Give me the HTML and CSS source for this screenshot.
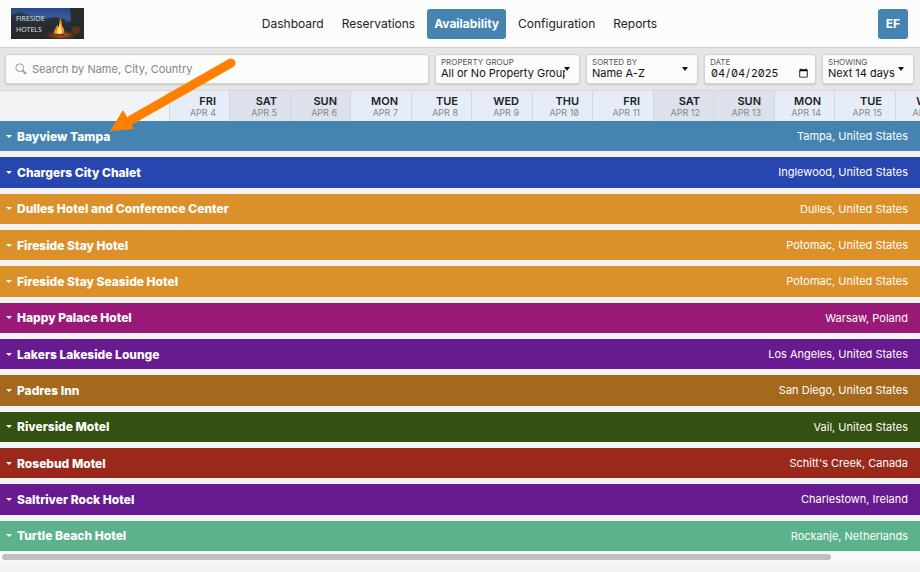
FILE: index.html
```html
<!DOCTYPE html>
<html lang="en">
<head>
<meta charset="utf-8">
<meta name="viewport" content="width=device-width, initial-scale=1">
<title>Availability</title>
<link rel="stylesheet" href="styles.css">
</head>
<body>
<header class="topbar">
  <a class="brand" href="#" aria-label="Fireside Hotels">
    <svg class="logo" viewBox="0 0 73 31" aria-hidden="true">
      <defs>
        <linearGradient id="sky" x1="0" y1="0" x2="0" y2="1">
          <stop offset="0" stop-color="#27488c"/><stop offset=".35" stop-color="#3c5f98"/><stop offset=".5" stop-color="#20303f"/><stop offset="1" stop-color="#1c2023"/>
        </linearGradient>
        <linearGradient id="ground" x1="0" y1="0" x2="0" y2="1">
          <stop offset="0" stop-color="#2a394a"/><stop offset=".5" stop-color="#262c31"/><stop offset="1" stop-color="#2b2624"/>
        </linearGradient>
        <radialGradient id="glow"><stop offset="0" stop-color="#e9852a"/><stop offset=".5" stop-color="#8a3f1c" stop-opacity=".7"/><stop offset="1" stop-color="#3a2417" stop-opacity="0"/></radialGradient>
      </defs>
      <rect width="73" height="31" fill="url(#sky)"/>
      <path d="M0 7L8 4L20 8L32 11L44 9L54 11V31H0Z" fill="url(#ground)"/>
      <path d="M59 0H73V31H55L57 19L60 12Z" fill="#262c29"/>
      <ellipse cx="50" cy="27" rx="18" ry="6" fill="url(#glow)"/>
      <ellipse cx="65" cy="22" rx="4" ry="4" fill="#643021"/>
      <path d="M43 25C43 21 45 21 46 17L48 19L49 10C52 15 50 17 52 19L53 21C54 25 52 27 48 27S44 27 43 25Z" fill="#f38b1d"/>
      <path d="M46 25Q46 21 48 19L49 14L50 20Q53 26 48 26Z" fill="#ffe77c"/>
      <path d="M42 28L53 26M43 26L55 28" stroke="#6b2d15" stroke-width="1"/>
      <text x="5" y="13" class="logo-text">FIRESIDE</text>
      <text x="5" y="24" class="logo-text">HOTELS</text>
    </svg>
  </a>
  <nav class="nav">
    <a href="#">Dashboard</a>
    <a href="#">Reservations</a>
    <a href="#" class="active" aria-current="page">Availability</a>
    <a href="#">Configuration</a>
    <a href="#">Reports</a>
  </nav>
  <button class="avatar" type="button">EF</button>
</header>

<form class="filters">
  <div class="field search">
    <svg viewBox="0 0 12 12" aria-hidden="true"><circle cx="4.7" cy="4.7" r="3.9"/><path d="M7.6 7.6L11 11" stroke-width="2"/></svg>
    <input type="search" aria-label="Search" placeholder="Search by Name, City, Country">
  </div>
  <div class="field picker group">
    <label for="group">PROPERTY GROUP</label>
    <select id="group"><option>All or No Property Group</option></select>
  </div>
  <div class="field picker sort">
    <label for="sort">SORTED BY</label>
    <select id="sort"><option>Name A-Z</option></select>
  </div>
  <div class="field date">
    <label for="date">DATE</label>
    <input id="date" type="date" value="2025-04-04">
  </div>
  <div class="field picker showing">
    <label for="showing">SHOWING</label>
    <select id="showing"><option>Next 14 days</option></select>
  </div>
</form>

<main class="board">
  <div class="days">
    <div class="corner"></div>
    <div class="day"><b>FRI</b><span>APR 4</span></div>
    <div class="day weekend"><b>SAT</b><span>APR 5</span></div>
    <div class="day weekend"><b>SUN</b><span>APR 6</span></div>
    <div class="day"><b>MON</b><span>APR 7</span></div>
    <div class="day"><b>TUE</b><span>APR 8</span></div>
    <div class="day"><b>WED</b><span>APR 9</span></div>
    <div class="day"><b>THU</b><span>APR 10</span></div>
    <div class="day"><b>FRI</b><span>APR 11</span></div>
    <div class="day weekend"><b>SAT</b><span>APR 12</span></div>
    <div class="day weekend"><b>SUN</b><span>APR 13</span></div>
    <div class="day"><b>MON</b><span>APR 14</span></div>
    <div class="day"><b>TUE</b><span>APR 15</span></div>
    <div class="day"><b>WED</b><span>APR 16</span></div>
  </div>
  <div class="hotels">
    <button type="button" class="hotel steel"><b>Bayview Tampa</b><span>Tampa, United States</span></button>
    <button type="button" class="hotel blue"><b>Chargers City Chalet</b><span>Inglewood, United States</span></button>
    <button type="button" class="hotel orange"><b>Dulles Hotel and Conference Center</b><span>Dulles, United States</span></button>
    <button type="button" class="hotel orange"><b>Fireside Stay Hotel</b><span>Potomac, United States</span></button>
    <button type="button" class="hotel orange"><b>Fireside Stay Seaside Hotel</b><span>Potomac, United States</span></button>
    <button type="button" class="hotel magenta"><b>Happy Palace Hotel</b><span>Warsaw, Poland</span></button>
    <button type="button" class="hotel purple"><b>Lakers Lakeside Lounge</b><span>Los Angeles, United States</span></button>
    <button type="button" class="hotel brown"><b>Padres Inn</b><span>San Diego, United States</span></button>
    <button type="button" class="hotel green"><b>Riverside Motel</b><span>Vail, United States</span></button>
    <button type="button" class="hotel red"><b>Rosebud Motel</b><span>Schitt's Creek, Canada</span></button>
    <button type="button" class="hotel purple"><b>Saltriver Rock Hotel</b><span>Charlestown, Ireland</span></button>
    <button type="button" class="hotel mint"><b>Turtle Beach Hotel</b><span>Rockanje, Netherlands</span></button>
  </div>
  <div class="scrollbar"><div class="thumb"></div></div>
</main>

<svg class="pointer" viewBox="0 0 130 76" aria-hidden="true">
  <path d="M122 7L22 64" stroke="#ff8000" stroke-width="9" stroke-linecap="round"/>
  <path d="M1 75L14 54L25 73Z" fill="#ff8000"/>
</svg>
</body>
</html>
```

FILE: styles.css
```css
* { box-sizing: border-box; }
body {
  margin: 0;
  min-height: 100vh;
  display: flex;
  flex-direction: column;
  position: relative;
  overflow-x: hidden;
  background: #f2f3f5;
  color: #222;
  font-family: Inter, "Liberation Sans", sans-serif;
  font-size: 12px;
}
button, input, select { font: inherit; color: inherit; }
.topbar {
  display: grid;
  grid-template-columns: 1fr auto 1fr;
  align-items: center;
  height: 48px;
  padding: 0 12px 0 11px;
  background: #fcfcfc;
  border-bottom: 1px solid #d2d2d2;
}
.brand { justify-self: start; }
.logo { display: block; width: 73px; height: 31px; }
.logo-text { font: 7px "Open Sans", sans-serif; fill: #e6e8ec; }
.nav { display: flex; }
.nav a {
  padding: 0 9px;
  line-height: 30px;
  border-radius: 3px;
  color: #222;
  text-decoration: none;
}
.nav .active { margin: 0 3px; padding: 0 7px; background: #4584b1; color: #fff; font-weight: 700; }
.avatar {
  justify-self: end;
  width: 30px;
  height: 30px;
  padding: 0;
  border: 0;
  border-radius: 3px;
  background: #4584b1;
  color: #fff;
  font-weight: 700;
}
.filters {
  display: flex;
  gap: 6px;
  padding: 6px 6px 6px 5px;
  background: #e6e6e6;
  border-bottom: 1px solid #d8d8d8;
}
.field {
  display: flex;
  flex-direction: column;
  height: 30px;
  border: 1px solid #d4d4d4;
  border-radius: 3px;
  background: #fcfcfc;
  box-shadow: 0 1px 2px #0002;
}
.field label { padding: 3px 0 0 5px; font-size: 8px; line-height: 9px; color: #555; }
.field input, .field select {
  width: 100%;
  min-width: 0;
  margin: 0;
  padding: 0 0 0 5px;
  border: 0;
  outline: 0;
  background: none;
  appearance: none;
  font-size: 11px;
  line-height: 12px;
  height: 12px;
  color: #111;
}
.field.search { flex: 1; flex-direction: row; align-items: center; padding: 0 9px; }
.search svg { flex: none; width: 12px; height: 12px; fill: none; stroke: #999; }
.field.search input { height: 28px; }
.search input::placeholder { color: #858585; opacity: 1; }
.picker { position: relative; }
.group::before {
  content: "";
  position: absolute;
  z-index: 1;
  right: 5px;
  top: 10px;
  width: 9px;
  height: 16px;
  background: #fcfcfc;
  pointer-events: none;
}
.picker::after {
  content: "";
  position: absolute;
  z-index: 2;
  right: 9px;
  top: 12px;
  border: 3px solid transparent;
  border-top: 4px solid #111;
  border-bottom: 0;
  pointer-events: none;
}
.group { width: 145px; }
.field.group select { width: 134px; }
.sort { width: 112px; }
.date { width: 112px; }
.field.date input { font-feature-settings: "zero"; }
.date input::-webkit-datetime-edit { padding: 0; }
.date input::-webkit-datetime-edit-fields-wrapper { padding: 0; }
.date input::-webkit-calendar-picker-indicator { width: 11px; height: 11px; padding: 0; margin: 0 6px 0 0; }
.showing { width: 92px; }
.board { flex: 1; display: flex; flex-direction: column; overflow: hidden; }
.days {
  display: grid;
  grid-template-columns: 169px;
  grid-auto-columns: 60px 61px;
  grid-auto-flow: column;
  height: 30px;
}
.day {
  padding: 4px 13px 0 0;
  border-left: 1px solid #d2d8e2;
  background: #e7edf8;
  text-align: right;
  font-size: 11px;
  line-height: 13px;
}
.day b { display: block; font-weight: 600; }
.day span { display: block; color: #84878d; font-size: 9px; line-height: 9px; font-feature-settings: "zero"; }
.weekend { background: #dce1eb; }
.hotels { flex: 1; display: grid; grid-auto-rows: 1fr; gap: 6px; }
.hotel {
  display: flex;
  align-items: center;
  gap: 5px;
  min-height: 30px;
  padding: 0 12px 0 6px;
  border: 0;
  color: #fff;
  text-align: left;
}
.hotel::before { content: ""; border: 3px solid transparent; border-top-color: #fff; border-bottom: 0; }
.hotel b { flex: 1; font-weight: 800; }
.hotel span { font-size: 11px; }
.steel { background: #4584b1; }
.blue { background: #2746b0; }
.orange { background: #dc9029; }
.magenta { background: #991a76; }
.purple { background: #681a90; }
.brown { background: #a4691c; }
.green { background: #335110; }
.red { background: #9b291b; }
.mint { background: #5cb28c; }
.scrollbar { height: 10px; margin-bottom: 11px; padding: 3px 2px 0; background: #fafafa; }
.thumb { width: 90.5%; height: 6px; border-radius: 3px; background: #bfbfbf; }
.pointer { position: absolute; left: 109px; top: 56px; width: 130px; height: 76px; fill: none; pointer-events: none; }
```
